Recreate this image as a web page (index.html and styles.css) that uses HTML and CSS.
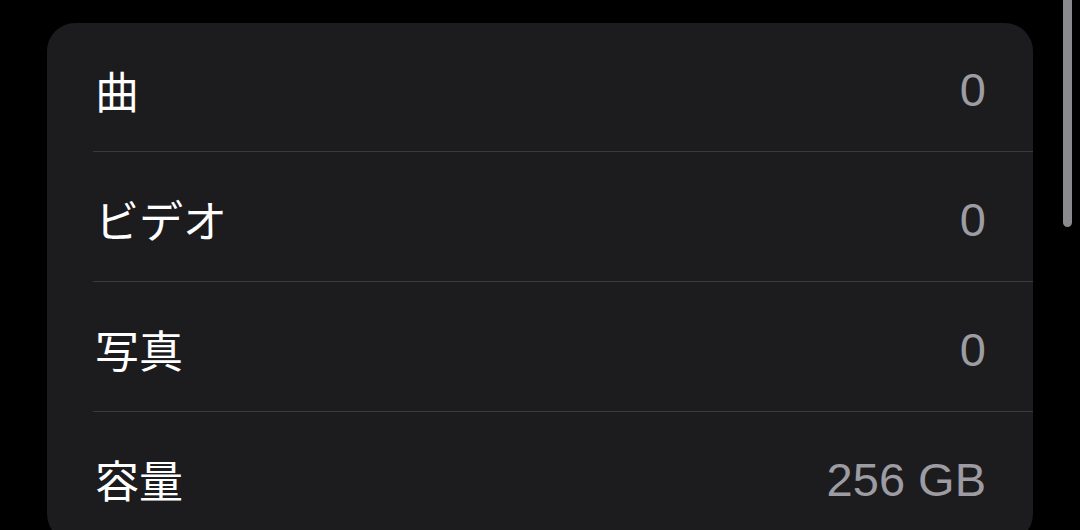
FILE: index.html
```html
<!DOCTYPE html>
<html lang="ja">
<head>
<meta charset="utf-8">
<link rel="stylesheet" href="styles.css">
</head>
<body>
<div class="page">
  <div class="card">
    <div class="row"><span class="label">曲</span><span class="value">0</span></div>
    <div class="row"><span class="label">ビデオ</span><span class="value">0</span></div>
    <div class="row"><span class="label">写真</span><span class="value">0</span></div>
    <div class="row"><span class="label">容量</span><span class="value">256 GB</span></div>
  </div>
</div>
<div class="scrollbar"></div>
</body>
</html>
```
FILE: styles.css
```css
html, body {
  margin: 0;
  padding: 0;
  background: #000;
  height: 100%;
  overflow: hidden;
}
.page {
  padding: 23px 0 0 47px;
}
.card {
  width: 986px;
  background: #1c1c1e;
  border-radius: 28px;
  display: flex;
  flex-direction: column;
}
.row {
  position: relative;
  height: 129px;
  display: flex;
  align-items: center;
  justify-content: space-between;
  padding: 4px 47px 0 48px;
  box-sizing: border-box;
}
.row + .row {
  height: 130px;
}
.row:not(:last-child)::after {
  content: "";
  position: absolute;
  left: 46px;
  right: 0;
  bottom: 0;
  height: 1px;
  background: #3a3a3d;
}
.label {
  font-family: "Noto Sans CJK JP", "Noto Sans", sans-serif;
  font-size: 44px;
  color: #fff;
  line-height: 1;
}
.value {
  font-family: "Liberation Sans", Arial, sans-serif;
  font-size: 47px;
  color: #9c9ca2;
  line-height: 1;
}
.scrollbar {
  position: fixed;
  left: 1063px;
  top: -10px;
  width: 9px;
  height: 237px;
  border-radius: 5px;
  background: #8a8a8d;
}
```
